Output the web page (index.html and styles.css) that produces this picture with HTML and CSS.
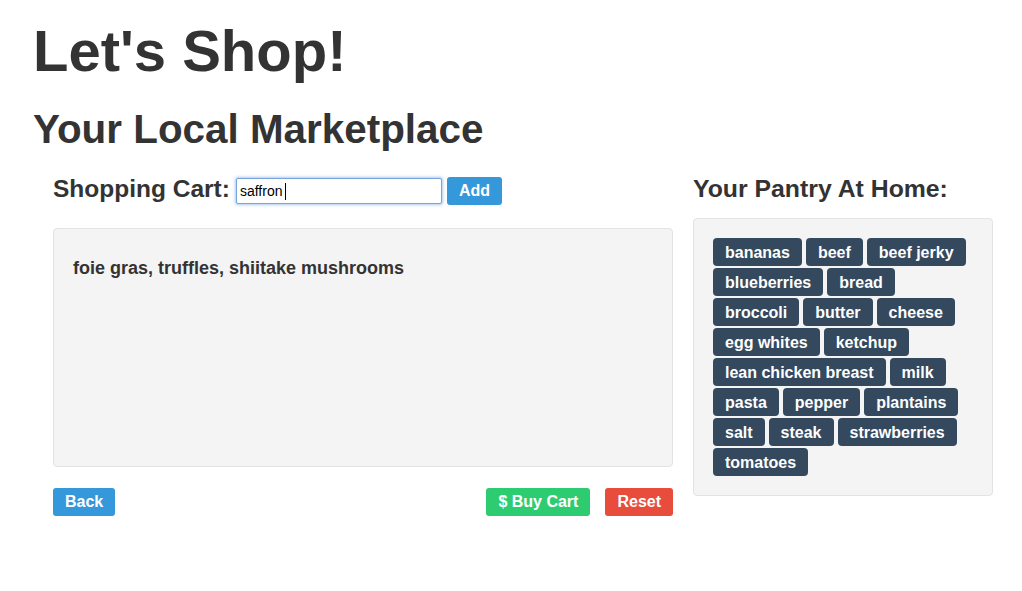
FILE: index.html
```html
<!DOCTYPE html>
<html>
<head>
<meta charset="utf-8">
<title>Let's Shop!</title>
<link rel="stylesheet" href="styles.css">
</head>
<body>
<div class="page">
  <h1 class="title">Let's Shop!</h1>
  <h2 class="subtitle">Your Local Marketplace</h2>
  <div class="main">
    <section class="cart-col">
      <div class="cart-head">
        <label class="cart-label" for="item">Shopping Cart:</label>
        <div class="field">
          <input id="item" class="item-input" type="text" value="saffron">
          <span class="caret"></span>
        </div>
        <button class="btn btn-blue btn-add">Add</button>
      </div>
      <div class="well cart-well">
        <h4 class="cart-items">foie gras, truffles, shiitake mushrooms</h4>
      </div>
      <div class="actions">
        <button class="btn btn-blue">Back</button>
        <div class="actions-right">
          <button class="btn btn-green">$ Buy Cart</button>
          <button class="btn btn-red">Reset</button>
        </div>
      </div>
    </section>
    <aside class="pantry-col">
      <h3 class="pantry-title">Your Pantry At Home:</h3>
      <div class="well pantry-well">
        <span class="tag">bananas</span>
        <span class="tag">beef</span>
        <span class="tag">beef jerky</span>
        <span class="tag">blueberries</span>
        <span class="tag">bread</span>
        <span class="tag">broccoli</span>
        <span class="tag">butter</span>
        <span class="tag">cheese</span>
        <span class="tag">egg whites</span>
        <span class="tag">ketchup</span>
        <span class="tag">lean chicken breast</span>
        <span class="tag">milk</span>
        <span class="tag">pasta</span>
        <span class="tag">pepper</span>
        <span class="tag">plantains</span>
        <span class="tag">salt</span>
        <span class="tag">steak</span>
        <span class="tag">strawberries</span>
        <span class="tag">tomatoes</span>
      </div>
    </aside>
  </div>
</div>
</body>
</html>
```

FILE: styles.css
```css
* { box-sizing: border-box; }

html, body {
  margin: 0;
  padding: 0;
  background: #ffffff;
}

body {
  font-family: "Liberation Sans", Arial, Helvetica, sans-serif;
  color: #333333;
  font-size: 15px;
}

.page {
  padding: 0 0 0 33px;
}

.title {
  margin: 19px 0 0 0;
  font-size: 58px;
  line-height: 64px;
  font-weight: bold;
}

.subtitle {
  margin: 24px 0 0 0;
  font-size: 40.4px;
  line-height: 44px;
  font-weight: bold;
}

.main {
  display: flex;
  gap: 20px;
  margin-top: 24px;
  padding-left: 20px;
}

.cart-col {
  width: 620px;
  flex-shrink: 0;
}

.cart-head {
  display: flex;
  align-items: flex-start;
  height: 30px;
}

.cart-label {
  font-size: 24.5px;
  line-height: 28px;
  font-weight: bold;
  margin-right: 6px;
}

.field {
  position: relative;
  margin-top: 3px;
}

.item-input {
  display: block;
  width: 206px;
  height: 26px;
  margin: 0;
  padding: 0 3px;
  border: 1px solid #7aa3dc;
  border-radius: 2px;
  box-shadow: 0 0 3px 1px rgba(102, 160, 230, 0.55);
  font-family: "Liberation Sans", Arial, sans-serif;
  font-size: 14px;
  color: #000;
  outline: none;
  background: #fff;
}

.caret {
  position: absolute;
  left: 49px;
  top: 5px;
  width: 1px;
  height: 17px;
  background: #000;
}

.btn {
  display: inline-block;
  height: 28px;
  padding: 0 12px;
  border: none;
  border-radius: 3px;
  font-family: "Liberation Sans", Arial, sans-serif;
  font-size: 16px;
  font-weight: bold;
  line-height: 28px;
  color: #ffffff;
  cursor: pointer;
}

.btn-add {
  margin-left: 5px;
  margin-top: 2px;
}

.btn-blue { background: #3498db; }
.btn-green { background: #2ecc71; }
.btn-red { background: #e74c3c; }

.well {
  background: #f4f4f4;
  border: 1px solid #e3e3e3;
  border-radius: 4px;
  padding: 19px;
}

.cart-well {
  margin-top: 23px;
  height: 239px;
}

.cart-items {
  margin: 10px 0 0 0;
  font-size: 18px;
  line-height: 20px;
  font-weight: bold;
}

.actions {
  display: flex;
  justify-content: space-between;
  margin-top: 21px;
}

.actions-right {
  display: flex;
  gap: 15px;
}

.pantry-col {
  width: 300px;
  flex-shrink: 0;
}

.pantry-title {
  margin: 0;
  font-size: 24.8px;
  line-height: 28px;
  font-weight: bold;
}

.pantry-well {
  margin-top: 15px;
  display: flex;
  flex-wrap: wrap;
  gap: 2px 4px;
  align-content: flex-start;
}

.tag {
  display: inline-block;
  height: 28px;
  padding: 2px 12px 0;
  line-height: 26px;
  font-size: 16px;
  font-weight: bold;
  color: #ffffff;
  background: #34495e;
  border-radius: 4px;
  white-space: nowrap;
}
```
